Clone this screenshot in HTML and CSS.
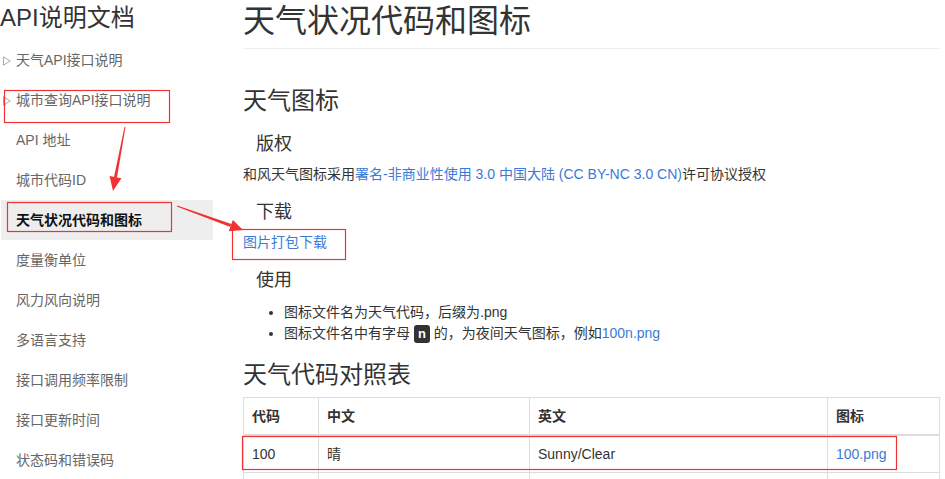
FILE: index.html
```html
<!DOCTYPE html>
<html lang="zh-CN">
<head>
  <meta charset="UTF-8" />
  <title>天气状况代码和图标 - API说明文档</title>
  <link rel="stylesheet" href="styles.css">
</head>
<body>
  <div class="page">
    <!-- Sidebar -->
    <aside class="sidebar">
      <div class="brand">API说明文档</div>
      <ul class="nav">
        <li class="sub"><svg class="caret" viewBox="0 0 8 10"><path d="M0.5 0.8 L7.2 5 L0.5 9.2 Z" /></svg>天气API接口说明</li>
        <li class="sub"><svg class="caret" viewBox="0 0 8 10"><path d="M0.5 0.8 L7.2 5 L0.5 9.2 Z" /></svg>城市查询API接口说明</li>
        <li>API 地址</li>
        <li>城市代码ID</li>
        <li class="active">天气状况代码和图标</li>
        <li>度量衡单位</li>
        <li>风力风向说明</li>
        <li>多语言支持</li>
        <li>接口调用频率限制</li>
        <li>接口更新时间</li>
        <li>状态码和错误码</li>
      </ul>
    </aside>

    <!-- Content -->
    <main class="content">
      <h1>天气状况代码和图标</h1>

      <h2 class="first">天气图标</h2>

      <h3>版权</h3>
      <p>和风天气图标采用<a href="#">署名-非商业性使用 3.0 中国大陆 (CC BY-NC 3.0 CN)</a>许可协议授权</p>

      <h3>下载</h3>
      <p><a href="#">图片打包下载</a></p>

      <h3>使用</h3>
      <ul class="usage">
        <li>图标文件名为天气代码，后缀为.png</li>
        <li>图标文件名中有字母 <code>n</code> 的，为夜间天气图标，例如<a href="#">100n.png</a></li>
      </ul>

      <h2>天气代码对照表</h2>
      <table class="codes">
        <colgroup>
          <col class="c-code"><col class="c-zh"><col class="c-en"><col class="c-icon">
        </colgroup>
        <thead>
          <tr><th>代码</th><th>中文</th><th>英文</th><th>图标</th></tr>
        </thead>
        <tbody>
          <tr><td>100</td><td>晴</td><td>Sunny/Clear</td><td><a href="#">100.png</a></td></tr>
          <tr><td>101</td><td>多云</td><td>Cloudy</td><td><a href="#">101.png</a></td></tr>
        </tbody>
      </table>
    </main>
  </div>

  <!-- Screenshot annotations -->
  <svg class="marks" width="945" height="479" viewBox="0 0 945 479">
    <rect x="4.5" y="90.5" width="165" height="32" />
    <rect x="7.5" y="202.5" width="164" height="29" />
    <rect x="232.5" y="229.5" width="113" height="30" />
    <rect x="242.5" y="436.5" width="654" height="33" />
    <polygon class="fill" points="125.5,127 124.5,126.9 114,176.9 117,177.5" />
    <polygon class="fill" points="121.4,178.3 109.6,176.1 113,191" />
    <polygon class="fill" points="176.8,206.5 177.2,205.5 231.3,224.1 230.3,227" />
    <polygon class="fill" points="228.7,231.2 232.9,219.9 243,230" />
  </svg>
</body>
</html>
```

FILE: styles.css
```css
/* Reset and base */
* {
  box-sizing: border-box;
}
body {
  margin: 0;
  font-family: "Liberation Sans", "Noto Sans CJK SC", sans-serif;
  font-size: 14px;
  color: #333;
  background: #fff;
  position: relative;
  overflow: hidden;
}
a {
  color: #3a7bd5;
  text-decoration: none;
}
.page {
  display: flex;
  align-items: flex-start;
}

/* Sidebar */
.sidebar {
  width: 213px;
  flex-shrink: 0;
}
.brand {
  font-size: 24px;
  line-height: 30px;
  padding: 3px 0 7px;
  color: #333;
}
.nav {
  list-style: none;
  margin: 0;
  padding: 0;
}
.nav li {
  height: 40px;
  line-height: 40px;
  padding-left: 16px;
  color: #666;
  white-space: nowrap;
}
.nav li.sub .caret {
  width: 8px;
  height: 10px;
  margin-left: -13px;
  margin-right: 5px;
  vertical-align: -1px;
  fill: none;
  stroke: #aaa;
  stroke-width: 1;
}
.nav li.active {
  margin-left: 1px;
  padding-left: 15px;
  background: #eee;
  color: #111;
  font-weight: bold;
}

/* Content */
.content {
  flex: 1;
  padding: 0 5px 0 30px;
}
h1 {
  margin: 0;
  font-size: 32px;
  font-weight: normal;
  line-height: 40px;
  padding: 1px 0 7px;
  border-bottom: 1px solid #eee;
}
h2 {
  margin: 16px 0 0;
  font-size: 24px;
  font-weight: normal;
  line-height: 30px;
}
h2.first {
  margin-top: 37px;
}
h3 {
  margin: 16px 0 0;
  padding-left: 13px;
  font-size: 18px;
  font-weight: normal;
  line-height: 24px;
}
p {
  margin: 8px 0 0;
  line-height: 20px;
}
.usage {
  margin: 10px 0 0;
  padding-left: 41px;
}
.usage li {
  line-height: 21px;
}
code {
  display: inline-block;
  font-family: "Liberation Sans", sans-serif;
  font-size: 13px;
  font-weight: bold;
  line-height: 18px;
  padding: 0 4px;
  background: #333;
  color: #fff;
  border-radius: 3px;
}

/* Table */
.codes {
  width: 100%;
  margin-top: 7px;
  border-collapse: collapse;
  border: 1px solid #ddd;
}
.c-code { width: 75px; }
.c-zh { width: 211px; }
.c-en { width: 298px; }
.codes th,
.codes td {
  padding: 8px;
  line-height: 20px;
  text-align: left;
  border: 1px solid #ddd;
}
.codes th {
  font-weight: bold;
  border-bottom-width: 2px;
}

/* Annotation overlay */
.marks {
  position: absolute;
  left: 0;
  top: 0;
  pointer-events: none;
}
.marks rect {
  fill: none;
  stroke: #ee3333;
  stroke-width: 1.2;
}
.marks .fill {
  fill: #ee3333;
}
```
